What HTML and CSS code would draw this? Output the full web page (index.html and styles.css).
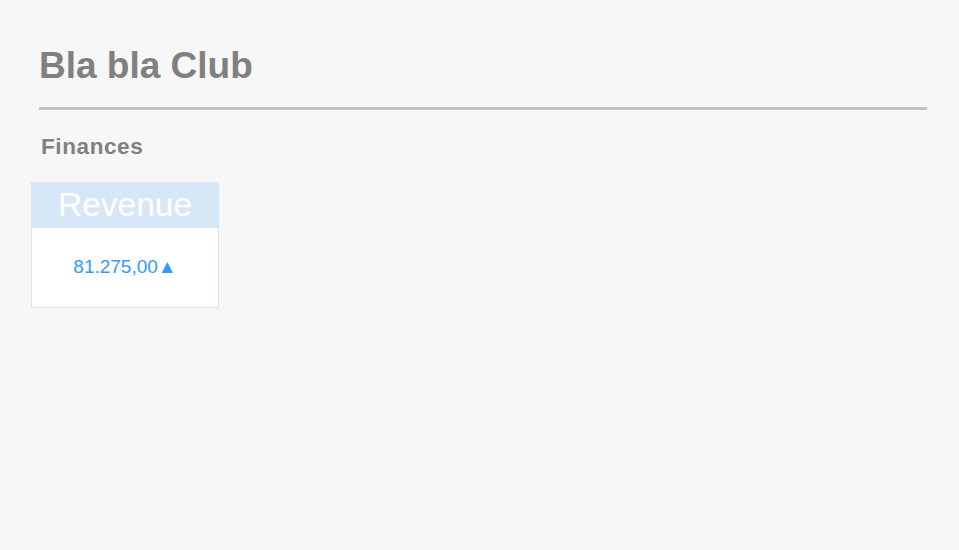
FILE: index.html
```html
<!DOCTYPE html>
<html>
<head>
<meta charset="utf-8">
<link rel="stylesheet" href="styles.css">
</head>
<body>
<div class="page">
  <h1 class="title">Bla bla Club</h1>
  <div class="rule"></div>
  <h2 class="section">Finances</h2>
  <div class="card">
    <div class="card-head">Revenue</div>
    <div class="card-body">81.275,00&#9650;</div>
  </div>
</div>
</body>
</html>
```
FILE: styles.css
```css
html, body {
  margin: 0;
  padding: 0;
  background: #f7f7f7;
  font-family: "Liberation Sans", Arial, sans-serif;
}
.page {
  padding: 44px 32px 0 31px;
}
.title {
  margin: 0 0 0 8px;
  font-size: 37px;
  line-height: 44px;
  font-weight: bold;
  color: #808080;
}
.rule {
  margin: 19px 0 0 8px;
  height: 3px;
  background: #c2c2c2;
}
.section {
  margin: 24px 0 0 10px;
  font-size: 22.5px;
  line-height: 26px;
  letter-spacing: 0.6px;
  font-weight: bold;
  color: #808080;
}
.card {
  margin-top: 22px;
  width: 186px;
  border: 1px solid #d2e4f5;
  background: #ffffff;
}
.card-head {
  background: #d6e7f7;
  color: #ffffff;
  font-size: 33.5px;
  line-height: 46px;
  height: 46px;
  text-align: center;
  margin: -1px -1px 0 -1px;
}
.card-body {
  height: 79px;
  line-height: 78px;
  text-align: center;
  color: #3399ff;
  font-size: 19px;
}
```
